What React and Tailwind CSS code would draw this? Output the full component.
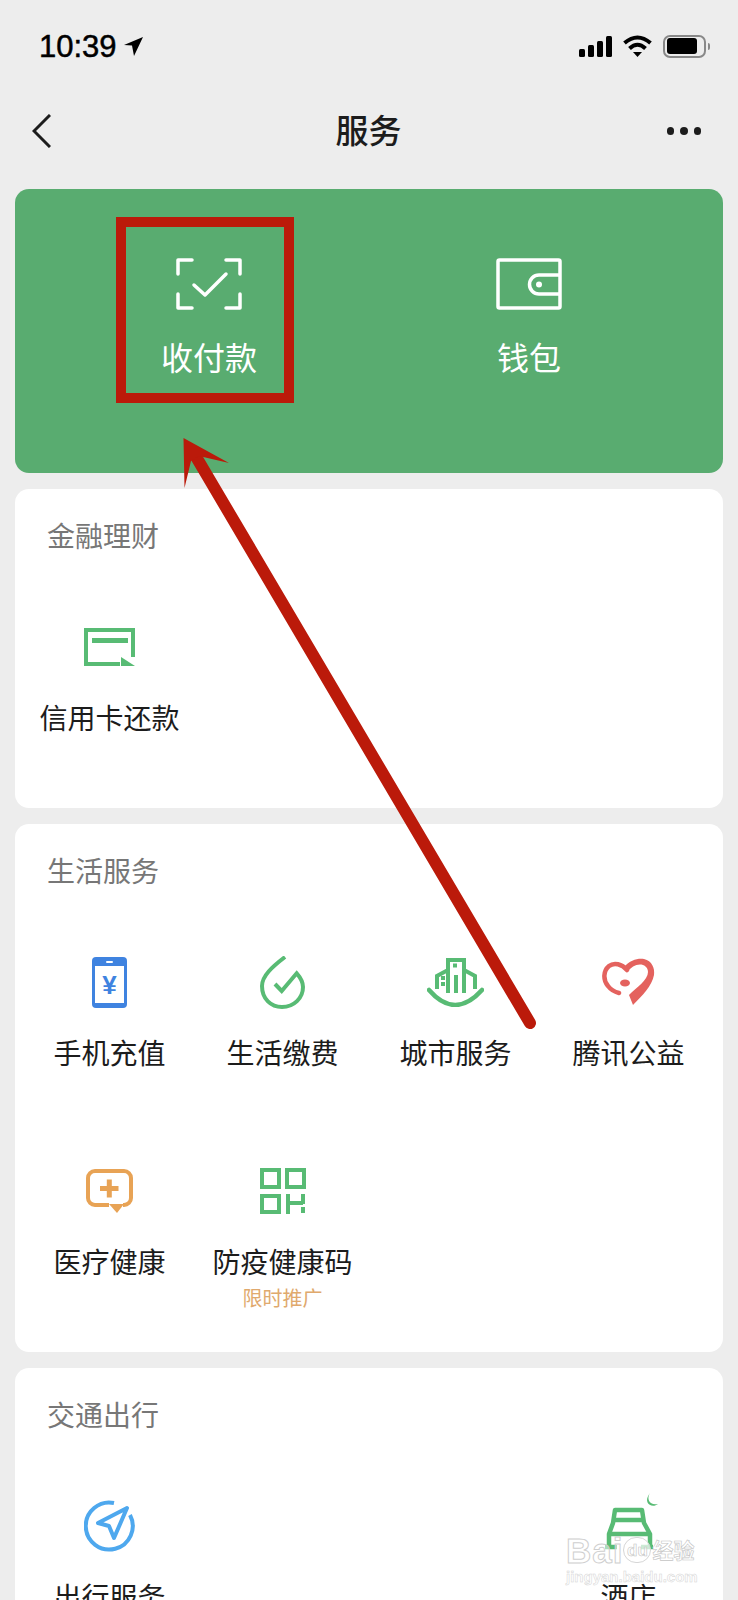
import React from 'react'

const GREEN = '#58bb74'

function ScanIcon() {
  return (
    <svg width="66" height="52" viewBox="0 0 66 52" fill="none" stroke="#fff" strokeWidth="3.5" strokeLinecap="round" strokeLinejoin="round">
      <path d="M16 2H2v14M50 2h14v14M16 50H2V36M50 50h14V36" />
      <path d="M18 27l11 10 21-21" strokeWidth="3.5" />
    </svg>
  )
}

function WalletIcon() {
  return (
    <svg width="66" height="52" viewBox="0 0 66 52" fill="none" stroke="#fff" strokeWidth="3.5" strokeLinejoin="round">
      <rect x="2" y="2" width="62" height="48" rx="1.5" />
      <path d="M64 17H43a9.5 9.5 0 0 0 0 19h21" />
      <circle cx="43" cy="26.5" r="3" fill="#fff" stroke="none" />
    </svg>
  )
}

function CardIcon() {
  return (
    <svg width="51" height="38" viewBox="0 0 51 38" fill="none">
      <path d="M49 29V2H2v34h34" stroke={GREEN} strokeWidth="4" />
      <rect x="8" y="10" width="36" height="5" fill={GREEN} />
      <path d="M37 29v9h14z" fill={GREEN} />
    </svg>
  )
}

function PhoneIcon() {
  return (
    <svg width="35" height="51" viewBox="0 0 35 51">
      <rect width="35" height="51" rx="4" fill="#3f83e0" />
      <rect x="3" y="9" width="29" height="37" fill="#fff" />
      <rect x="14" y="4" width="7" height="2" rx="1" fill="#fff" />
      <text x="17.5" y="37" textAnchor="middle" fontSize="26" fontWeight="700" fill="#3f83e0" fontFamily="Liberation Sans">¥</text>
    </svg>
  )
}

function DropIcon() {
  return (
    <svg width="46" height="53" viewBox="0 0 46 53" fill="none" stroke={GREEN} strokeWidth="4" strokeLinejoin="miter">
      <path d="M25 1C12 11 2 20 2 30c0 13 9 21 20 21 12 0 21-9 21-20 0-6-3-10-6.300-13.700L21.700 35 15 28" />
    </svg>
  )
}

function CityIcon() {
  return (
    <svg width="57" height="50" viewBox="0 0 57 50" fill="none" stroke={GREEN} strokeWidth="4.500">
      <path d="M2 33Q28 63 55 33" strokeLinecap="round" />
      <path d="M21 36V3h16v33M21 13l-11 6v13M37 13l11 6v13M29 18v18" strokeWidth="4" />
      <rect x="26" y="6.500" width="4" height="4" fill={GREEN} stroke="none" />
      <rect x="14" y="19" width="4" height="4" fill={GREEN} stroke="none" />
      <rect x="14" y="25" width="4" height="4" fill={GREEN} stroke="none" />
    </svg>
  )
}

function HeartIcon() {
  return (
    <svg width="54" height="48" viewBox="0 0 54 48" fill="none">
      <path d="M22 9C28 2 36 0 42 1c8 2 11 9 10 16-2 11-12 21-21 30l-4-10c7-7 19-15 19-23 0-5-4-7.500-8-7.500-5 0-9 3-13 7.500z" fill="#e4625e" />
      <path d="M25 12C20 6 12 4 7 8 1 13 1 22 6 28c3 4 7 6 11 7" stroke="#e4625e" strokeWidth="4.500" strokeLinecap="round" />
      <ellipse cx="23" cy="25" rx="5" ry="3.500" fill="#e4625e" />
    </svg>
  )
}

function MedicalIcon() {
  return (
    <svg width="47" height="44" viewBox="0 0 47 44" fill="none" stroke="#e8a355" strokeWidth="4">
      <path d="M23 36H9a7 7 0 0 1-7-7V9a7 7 0 0 1 7-7h29a7 7 0 0 1 7 7v20a7 7 0 0 1-7 7h-1" />
      <path d="M23 35h15l-7 9z" fill="#e8a355" stroke="none" />
      <path d="M14 19.500h18.500M23.300 10.500v18" strokeWidth="5" />
    </svg>
  )
}

function QrIcon() {
  return (
    <svg width="46" height="46" viewBox="0 0 46 46" fill="none" stroke={GREEN} strokeWidth="4">
      <rect x="2" y="2" width="17" height="17" />
      <rect x="27" y="2" width="17" height="17" />
      <rect x="2" y="28" width="17" height="16" />
      <path d="M28 26v20M28 35h15M43 26v10" />
      <rect x="41" y="39" width="4" height="6" fill={GREEN} stroke="none" />
    </svg>
  )
}

function NavIcon() {
  return (
    <svg width="51" height="52" viewBox="0 0 51 52" fill="none" stroke="#4ea8ee">
      <path d="M30 3A23.500 23.500 0 1 0 46 15" strokeWidth="4" />
      <path d="M43 8L14 23l11 3 5 12z" strokeWidth="4" strokeLinejoin="round" />
    </svg>
  )
}

function HotelIcon() {
  return (
    <svg width="50" height="50" viewBox="0 0 50 50" fill="none" stroke={GREEN} strokeWidth="4.500" className="overflow-visible">
      <path d="M5 47V33l4-11 2-13h27l2 13 6 11v14" strokeLinejoin="round" />
      <path d="M10 19h30M5 33h41" />
      <path d="M46-8c-4 6 0 13 8 11-6 5-16-1-8-11z" fill={GREEN} stroke="none" />
      <path d="M1 46h12M37 46h12" />
    </svg>
  )
}

function Item({ icon, label, sub }) {
  return (
    <div className="flex flex-col items-center">
      <div className="h-[60px] flex items-center justify-center">{icon}</div>
      <div className="mt-[25px] h-9 leading-9 text-[28px] text-[#1c1c1c] whitespace-nowrap">{label}</div>
      {sub && <div className="mt-[5px] h-6 leading-6 text-[20px] text-[#e0a96d]">{sub}</div>}
    </div>
  )
}

function Section({ title, className, children }) {
  return (
    <section className={`bg-white rounded-[14px] pt-[31px] ${className}`}>
      <h2 className="pl-8 h-9 leading-9 text-[28px] font-normal text-[#777]">{title}</h2>
      <div className="mt-[61px] px-2 grid grid-cols-4 auto-rows-[209px]">{children}</div>
    </section>
  )
}

export default function App() {
  return (
    <div
      className="relative w-[738px] h-[1600px] overflow-hidden bg-[#ededed]"
      style={{ fontFamily: '"Liberation Sans", "Noto Sans CJK SC", sans-serif' }}
    >
      {/* status bar */}
      <div className="h-[92px] pl-[39px] pr-[28px] flex items-center justify-between">
        <div className="flex items-center gap-[6px]">
          <span className="text-[31px] leading-none text-black [-webkit-text-stroke:0.5px_#000]">10:39</span>
          <svg width="21" height="21" viewBox="0 0 21 21" fill="#000">
            <path d="M20 1L1 9l8 .5L11 20z" />
          </svg>
        </div>
        <div className="flex items-center gap-[11px]">
          <div className="flex items-end gap-[3px] h-[21px]">
            <div className="w-[6px] h-[8px] bg-black rounded-[1.5px]" />
            <div className="w-[6px] h-[12px] bg-black rounded-[1.5px]" />
            <div className="w-[6px] h-[16px] bg-black rounded-[1.5px]" />
            <div className="w-[6px] h-[21px] bg-black rounded-[1.5px]" />
          </div>
          <svg width="29" height="22" viewBox="0 0 29 22" fill="none" stroke="#000" strokeWidth="4">
            <path d="M1.500 8Q14.500-3 27.500 8M6.500 13.500Q14.500 6 22.500 13.500" />
            <path d="M10 17h9l-4.500 5z" fill="#000" stroke="none" />
          </svg>
          <div className="flex items-center gap-[2px]">
            <div className="w-[43px] h-[23px] rounded-[7px] border-[2.5px] border-[#888] p-[1.5px]">
              <div className="w-[30px] h-full rounded-[3px] bg-black" />
            </div>
            <div className="w-[2px] h-[7px] bg-[#888] rounded-r" />
          </div>
        </div>
      </div>

      {/* nav */}
      <div className="h-[78px] pl-[32px] pr-[37px] grid grid-cols-[1fr_auto_1fr] items-center">
        <svg width="19" height="34" viewBox="0 0 19 34" fill="none" stroke="#1c1c1c" strokeWidth="3">
          <path d="M18 1L2 17l16 16" />
        </svg>
        <div className="ml-1 text-[33px] leading-none font-medium text-[#1c1c1c]">服务</div>
        <div className="flex justify-end gap-[6px]">
          <div className="w-[7.5px] h-[7.5px] rounded-full bg-[#1c1c1c]" />
          <div className="w-[7.5px] h-[7.5px] rounded-full bg-[#1c1c1c]" />
          <div className="w-[7.5px] h-[7.5px] rounded-full bg-[#1c1c1c]" />
        </div>
      </div>

      <main className="mt-[19px] px-[15px] flex flex-col gap-4">
        {/* green panel */}
        <div className="h-[284px] rounded-[14px] bg-[#59ac70] pl-[34px] pt-[69px] grid grid-cols-[320px_320px] items-start">
          <div className="flex flex-col items-center">
            <ScanIcon />
            <div className="mt-[31px] h-9 leading-9 text-[32px] text-white">收付款</div>
          </div>
          <div className="flex flex-col items-center">
            <WalletIcon />
            <div className="mt-[31px] h-9 leading-9 text-[32px] text-white">钱包</div>
          </div>
        </div>

        <Section title="金融理财" className="h-[319px]">
          <Item icon={<CardIcon />} label="信用卡还款" />
        </Section>

        <Section title="生活服务" className="h-[528px]">
          <Item icon={<PhoneIcon />} label="手机充值" />
          <Item icon={<DropIcon />} label="生活缴费" />
          <Item icon={<CityIcon />} label="城市服务" />
          <Item icon={<HeartIcon />} label="腾讯公益" />
          <Item icon={<MedicalIcon />} label="医疗健康" />
          <Item icon={<QrIcon />} label="防疫健康码" sub="限时推广" />
        </Section>

        <Section title="交通出行" className="h-[400px]">
          <Item icon={<NavIcon />} label="出行服务" />
          <div />
          <div />
          <Item icon={<HotelIcon />} label="酒店" />
        </Section>
      </main>

      {/* red annotation over the screenshot */}
      <div className="absolute left-[116px] top-[217px] w-[178px] h-[186px] border-[10px] border-[#bb1a0a]" />
      <svg className="absolute inset-0 pointer-events-none" width="738" height="1600" viewBox="0 0 738 1600" fill="none">
        <path d="M195 455L530 1023" stroke="#bb1a0a" strokeWidth="12" strokeLinecap="round" />
        <path d="M183.500 438L229 463 199 456 191 461 184.500 488z" fill="#bb1a0a" />
      </svg>

      {/* baidu watermark */}
      <div className="absolute left-[566px] top-[1534px] w-[134px] text-white/50">
        <div className="flex items-center h-[32px] whitespace-nowrap font-bold">
          <span className="text-[35px] tracking-[1px] leading-none [-webkit-text-stroke:1px_#cfcfcf]">Bai</span>
          <span className="w-[28px] h-[26px] flex items-center justify-center rounded-full bg-white/70 border border-[#d6d6d6] text-[17px] leading-none [-webkit-text-stroke:0.6px_#c4c4c4]">du</span>
          <span className="ml-[1px] text-[21px] leading-none [-webkit-text-stroke:0.6px_#c4c4c4]">经验</span>
        </div>
        <div className="mt-[1px] text-[15px] leading-5 whitespace-nowrap font-bold [-webkit-text-stroke:0.5px_#d4d4d4]">jingyan.baidu.com</div>
      </div>
    </div>
  )
}
